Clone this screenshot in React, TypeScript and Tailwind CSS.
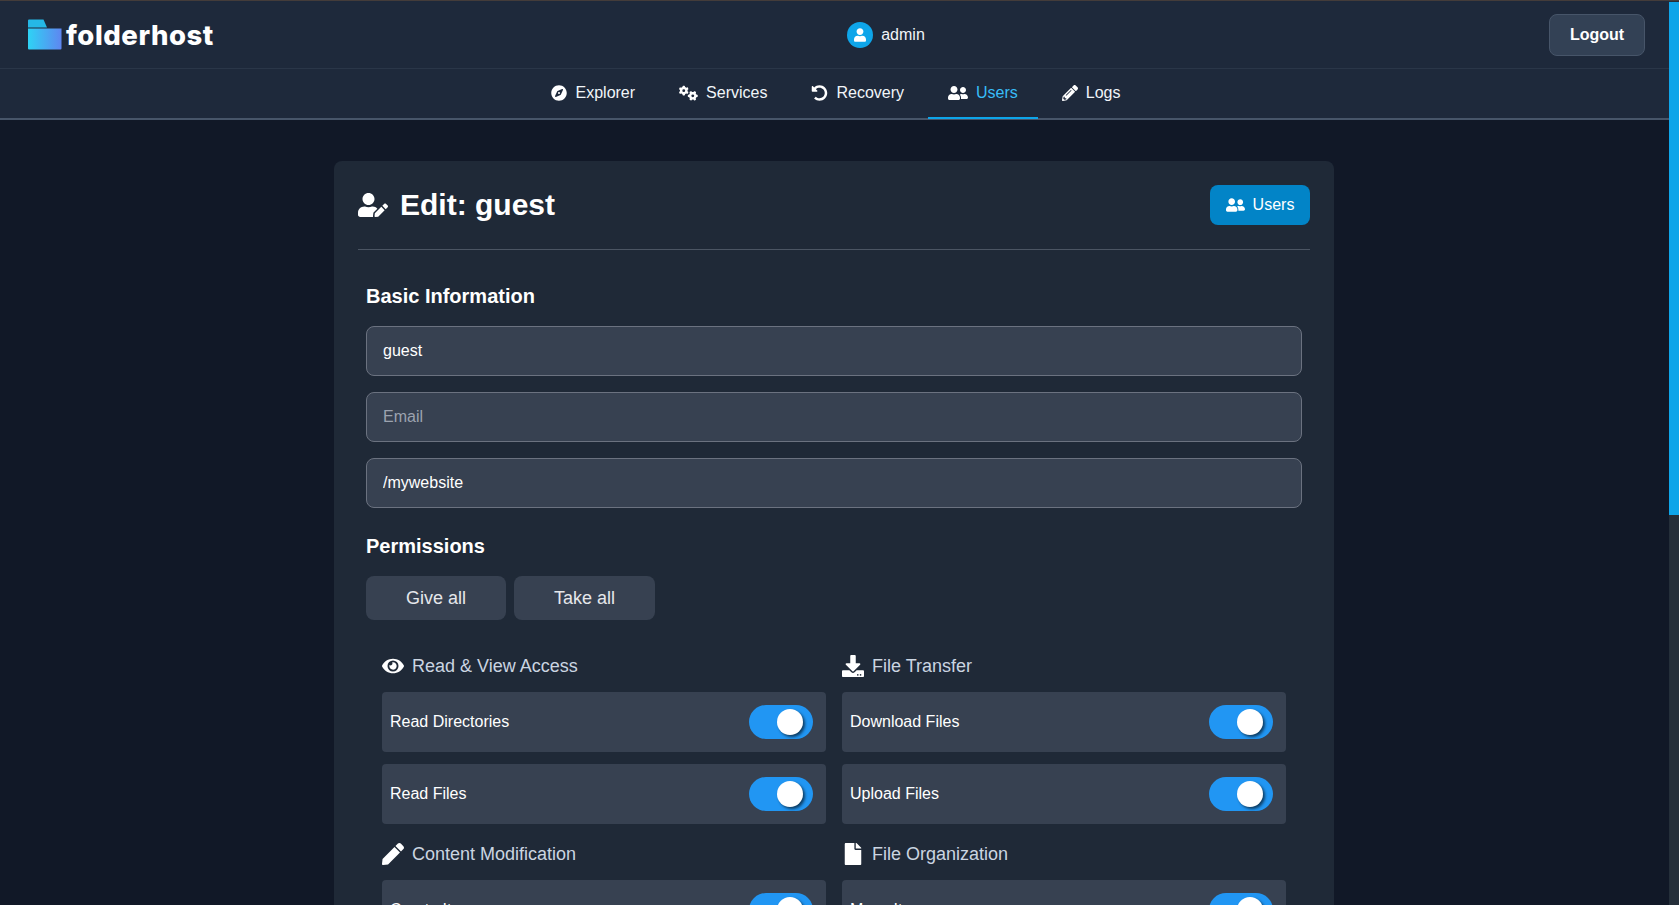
import { FaCompass, FaUndoAlt, FaUserFriends, FaPencilAlt, FaPen, FaUser, FaUserEdit, FaEye, FaDownload, FaFile } from 'react-icons/fa';
import { FaGears } from 'react-icons/fa6';
import type { ReactNode } from 'react';

const navItems = [
  { label: 'Explorer', icon: <FaCompass className="w-[18px] h-4 -ml-px" /> },
  { label: 'Services', icon: <FaGears className="w-[19px] h-4" /> },
  { label: 'Recovery', icon: <FaUndoAlt className="w-[17px] h-4" /> },
  { label: 'Users', icon: <FaUserFriends className="w-5 h-4" />, active: true },
  { label: 'Logs', icon: <FaPencilAlt className="w-4 h-4" /> },
];

function Logo() {
  return (
    <div className="w-[223px] flex items-center">
      <svg width="35" height="31" viewBox="0 0 35 31" className="ml-[27px]">
        <defs>
          <linearGradient id="folderFill" x1="0" x2="1" y1="0" y2="0">
            <stop offset="0" stopColor="#2ed3f5" />
            <stop offset="1" stopColor="#5f86f0" />
          </linearGradient>
        </defs>
        <path d="M1 1.5a1 1 0 0 1 1-1h14.5l3.5 8H1z" fill="#25b8e6" />
        <path d="M1 9.5h33.5v20a1 1 0 0 1-1 1H2a1 1 0 0 1-1-1z" fill="url(#folderFill)" />
      </svg>
      <span className="ml-1 mt-0.5 text-[27.5px] leading-none font-extrabold text-white tracking-[0.02em] font-['Inter',sans-serif]">
        folderhost
      </span>
    </div>
  );
}

function Toggle() {
  return (
    <div className="relative w-16 h-[34px] rounded-full bg-[#2196f3] mr-[13px]">
      <span className="absolute left-7 top-1 w-[26px] h-[26px] rounded-full bg-white shadow-[2px_2px_3px_rgba(0,0,0,0.6)]" />
    </div>
  );
}

function PermRow({ label }: { label: string }) {
  return (
    <div className="flex items-center justify-between h-[60px] pl-2 rounded bg-[#374151] text-white">
      <span>{label}</span>
      <Toggle />
    </div>
  );
}

function PermGroup({ icon, title, rows }: { icon: ReactNode; title: string; rows: string[] }) {
  return (
    <div>
      <div className="flex items-center h-7 mt-px mb-3 text-lg text-[#cbd5e1]">
        <span className="w-[22px] mr-2 flex justify-center text-white">{icon}</span>
        {title}
      </div>
      <div className="flex flex-col gap-3">
        {rows.map((r) => (
          <PermRow key={r} label={r} />
        ))}
      </div>
    </div>
  );
}

export default function App() {
  return (
    <div className="flex h-[905px] overflow-hidden bg-[#111827] text-white font-['Liberation_Sans',Arial,sans-serif]">
      <div className="flex-1 min-w-0">
        <header className="h-[69px] flex items-center justify-between border-t border-t-[#443c3a] border-b border-b-[#2a3648] bg-[#1e293b] pr-6">
          <Logo />
          <div className="flex items-center gap-2">
            <span className="w-[26px] h-[26px] rounded-full bg-[#0ea5e9] flex items-center justify-center">
              <FaUser className="w-3 h-3.5" />
            </span>
            <span className="text-[#f1f5f9]">admin</span>
          </div>
          <button className="w-24 h-[42px] rounded-lg border border-[#475569] bg-[#334155] font-bold">Logout</button>
        </header>
        <nav className="h-[51px] flex justify-center gap-1 pl-0.5 bg-[#1e293b] border-b-2 border-b-[#475569]">
          {navItems.map((n) => (
            <a
              key={n.label}
              className={
                n.active
                  ? 'flex items-center gap-2 px-5 h-[50px] border-b-2 border-b-[#0ea5e9] text-[#38bdf8]'
                  : 'flex items-center gap-2 px-5 h-[50px] border-b-2 border-b-transparent text-[#f1f5f9]'
              }
            >
              <span className="text-white">{n.icon}</span>
              {n.label}
            </a>
          ))}
        </nav>
        <main className="w-[1000px] ml-[334px] mt-[41px] rounded-lg bg-[#1f2937] p-6">
          <div className="flex items-center justify-between pb-6 border-b border-b-[#4b5563]">
            <h1 className="flex items-center gap-3 text-3xl font-bold">
              <FaUserEdit className="w-[30px] h-6" />
              Edit: guest
            </h1>
            <button className="flex items-center gap-2 h-10 w-[100px] justify-center rounded-lg bg-[#0284c7]">
              <FaUserFriends className="w-[19px] h-4" />
              Users
            </button>
          </div>
          <div className="px-2">
            <h2 className="mt-8 mb-4 text-xl font-bold">Basic Information</h2>
            <div className="flex flex-col gap-4">
              <input readOnly value="guest" className="h-[50px] px-4 rounded-lg bg-[#374151] border border-[#6b7280] text-white" />
              <input readOnly placeholder="Email" className="h-[50px] px-4 rounded-lg bg-[#374151] border border-[#6b7280] placeholder:text-[#9ca3af]" />
              <input readOnly value="/mywebsite" className="h-[50px] px-4 rounded-lg bg-[#374151] border border-[#6b7280] text-white" />
            </div>
            <h2 className="mt-6 mb-4 text-xl font-bold">Permissions</h2>
            <div className="flex gap-2">
              <button className="w-[140px] h-11 rounded-lg bg-[#374151] text-lg text-[#e5e7eb]">Give all</button>
              <button className="w-[141px] h-11 rounded-lg bg-[#374151] text-lg text-[#e5e7eb]">Take all</button>
            </div>
            <div className="mt-[31px] px-4 grid grid-cols-2 gap-x-4 gap-y-[15px]">
              <PermGroup icon={<FaEye className="w-[22px] h-[22px]" />} title="Read & View Access" rows={['Read Directories', 'Read Files']} />
              <PermGroup icon={<FaDownload className="w-[22px] h-[22px]" />} title="File Transfer" rows={['Download Files', 'Upload Files']} />
              <PermGroup icon={<FaPen className="w-[22px] h-[22px]" />} title="Content Modification" rows={['Create Items']} />
              <PermGroup icon={<FaFile className="w-[22px] h-[22px]" />} title="File Organization" rows={['Move Items']} />
            </div>
          </div>
        </main>
      </div>
      <div className="w-[10px] shrink-0 bg-[#252f3a] border-t border-t-[#443c3a] pt-px">
        <div className="h-[513px] bg-[#0ea5e9]" />
      </div>
    </div>
  );
}
